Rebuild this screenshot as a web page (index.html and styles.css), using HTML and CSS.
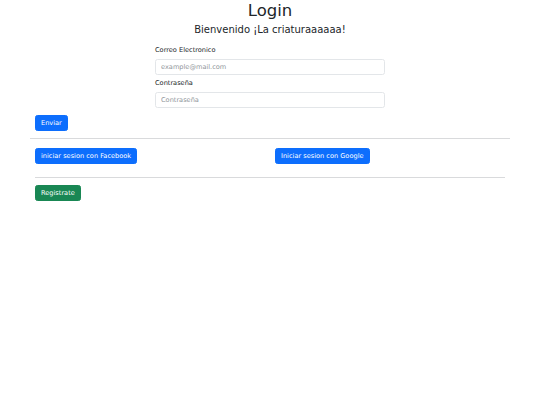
FILE: index.html
```html
<!DOCTYPE html>
<html lang="es">
<head>
<meta charset="utf-8">
<title>Login</title>
<link rel="stylesheet" href="styles.css">
</head>
<body>
<main class="container">
  <h1 class="title">Login</h1>
  <h4 class="subtitle">Bienvenido ¡La criaturaaaaaa!</h4>
  <form class="login-form">
    <div class="field">
      <label class="field-label" for="email">Correo Electronico</label>
      <input class="field-input" id="email" type="email" placeholder="example@mail.com">
    </div>
    <div class="field">
      <label class="field-label" for="pass">Contraseña</label>
      <input class="field-input" id="pass" type="password" placeholder="Contraseña">
    </div>
  </form>
  <div class="action-row submit-row">
    <button type="button" class="btn btn-primary">Enviar</button>
  </div>
  <hr class="divider divider-wide">
  <div class="social-row">
    <div class="social-col"><button type="button" class="btn btn-primary">iniciar sesion con Facebook</button></div>
    <div class="social-col"><button type="button" class="btn btn-primary">Iniciar sesion con Google</button></div>
  </div>
  <hr class="divider divider-narrow">
  <div class="action-row register-row">
    <button type="button" class="btn btn-success">Registrate</button>
  </div>
</main>
</body>
</html>
```
FILE: styles.css
```css
body {
  margin: 0;
  background: #fff;
  color: #212529;
  font-family: "DejaVu Sans", "Noto Sans", sans-serif;
}

.container {
  width: 480px;
  margin: 0 auto;
}

.title {
  margin: 0;
  padding-top: 1.2px;
  font-size: 16.5px;
  font-weight: 400;
  line-height: 19.8px;
  text-align: center;
}

.subtitle {
  margin: 3.3px 0 0;
  font-size: 10px;
  font-weight: 400;
  line-height: 12px;
  text-align: center;
}

.login-form {
  margin: 9.6px 0 0;
  padding: 0 125px;
}

.field + .field {
  margin-top: 3.7px;
}

.field-label {
  display: block;
  margin-bottom: 3.3px;
  font-size: 6.6px;
  line-height: 9.9px;
}

.field-input {
  display: block;
  box-sizing: border-box;
  width: 100%;
  height: 16px;
  margin: 0;
  padding: 0 5px;
  border: 1px solid #e3e6e9;
  border-radius: 2.5px;
  background: #fff;
  color: #212529;
  font-family: "DejaVu Sans", sans-serif;
  font-size: 6.6px;
  outline: none;
}

.field-input::placeholder {
  color: #8f959a;
}

.action-row {
  display: flex;
  padding: 0 5px;
}

.submit-row {
  margin-top: 7px;
}

.register-row {
  margin-top: 7px;
}

.btn {
  display: inline-block;
  box-sizing: border-box;
  height: 16px;
  margin: 0;
  padding: 2px 5px;
  border: 1px solid transparent;
  border-radius: 2.5px;
  color: #fff;
  font-family: "DejaVu Sans", sans-serif;
  font-size: 6.6px;
  line-height: 10px;
  white-space: nowrap;
  cursor: pointer;
}

.btn-primary {
  background: #0d6efd;
  border-color: #0d6efd;
}

.btn-success {
  background: #198754;
  border-color: #198754;
}

.divider {
  height: 0;
  border: 0;
  border-top: 1px solid #d9dadc;
}

.divider-wide {
  margin: 7px 0 9px;
}

.divider-narrow {
  margin: 13px 5px 0;
}

.social-row {
  display: grid;
  grid-template-columns: 1fr 1fr;
}

.social-col {
  display: flex;
  padding: 0 5px;
}
```
